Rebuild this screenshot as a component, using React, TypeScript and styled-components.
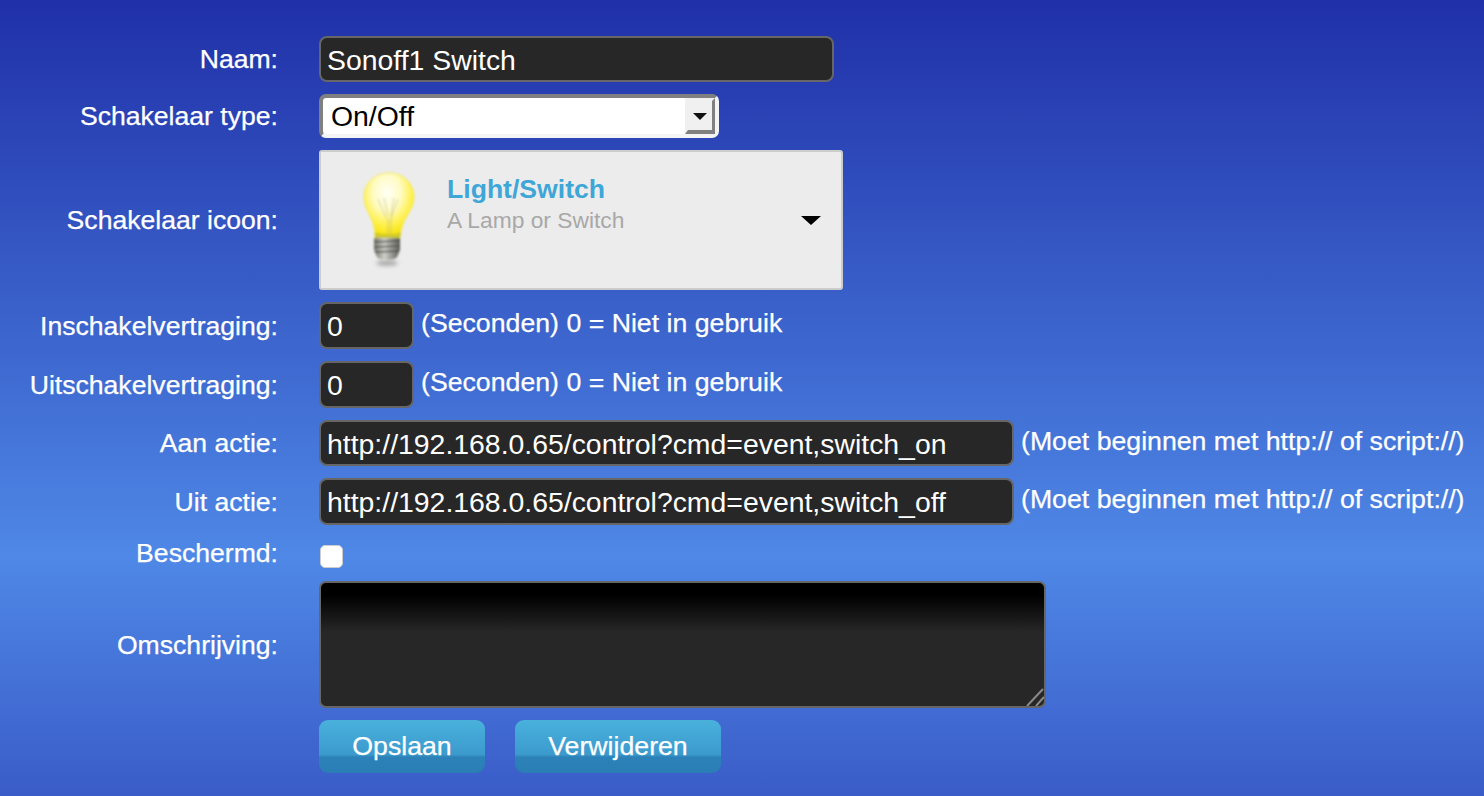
import React from 'react';
import styled, { createGlobalStyle } from 'styled-components';

const GlobalStyle = createGlobalStyle`
  html, body {
    margin: 0;
    padding: 0;
    height: 100%;
  }

  body {
    font-family: 'Liberation Sans', Arial, sans-serif;
    color: #fff;
    overflow: hidden;
  }
`;

const Page = styled.main`
  box-sizing: border-box;
  width: 1484px;
  height: 796px;
  padding-top: 36px;
  background: linear-gradient(to bottom, #2030a8 0%, #4f88e6 70%, #3a5cc8 100%);
`;

const Form = styled.form`
  display: grid;
  grid-template-columns: 278px 1fr;
  grid-template-rows: 46px 44px 140px 47px 47px 46px 47px 32px 127px 53px;
  column-gap: 41px;
  row-gap: 12px;
  align-items: center;
`;

const Label = styled.label`
  justify-self: end;
  font-size: 26.6px;
  line-height: 30px;
  -webkit-text-stroke: 0.25px #fff;
`;

const Row = styled.div`
  display: flex;
  align-items: center;
  height: 100%;
  gap: 7px;
`;

const TextInput = styled.input<{ $width: number }>`
  box-sizing: border-box;
  width: ${(p) => p.$width}px;
  height: 100%;
  padding: 2px 6px 0;
  border: 2px solid #666;
  border-radius: 8px;
  outline: none;
  background: #272727;
  color: #fff;
  font-family: inherit;
  font-size: 28.4px;
`;

const Hint = styled.span`
  font-size: 26.7px;
  line-height: 30px;
  margin-bottom: 5px;
  -webkit-text-stroke: 0.25px #fff;
`;

const SelectBox = styled.div`
  position: relative;
  box-sizing: border-box;
  width: 400px;
  height: 44px;
  border-style: solid;
  border-width: 4px;
  border-color: #808080 #f4f4f4 #f4f4f4 #808080;
  border-radius: 7px;
  background: #fff;
`;

const NativeSelect = styled.select`
  appearance: none;
  display: block;
  width: 100%;
  height: 100%;
  padding: 0 0 0 8px;
  border: none;
  outline: none;
  background: transparent;
  color: #000;
  font-family: inherit;
  font-size: 28.4px;
`;

const SelectButton = styled.span`
  position: absolute;
  top: 0;
  right: 0;
  bottom: 0;
  box-sizing: border-box;
  display: flex;
  align-items: center;
  justify-content: center;
  width: 30px;
  border-style: solid;
  border-width: 3px 3px 4px 3px;
  border-color: #f0f0f0 #808080 #808080 #f0f0f0;
  background: #f0f0f0;
  pointer-events: none;

  &::after {
    content: '';
    margin-top: 1px;
    border-style: solid;
    border-width: 7px 7px 0;
    border-color: #111 transparent transparent;
  }
`;

const IconPicker = styled.div`
  box-sizing: border-box;
  display: flex;
  align-items: center;
  width: 524px;
  height: 140px;
  padding: 0 20px 0 38px;
  border: 2px solid #ccc;
  border-radius: 3px;
  background: #ececec;
`;

const PickerText = styled.div`
  display: flex;
  flex-direction: column;
  margin-left: 28px;
  margin-bottom: 32px;
  flex: 1;
`;

const PickerTitle = styled.span`
  color: #3fa6d8;
  font-size: 26.6px;
  font-weight: 700;
  line-height: 31px;
`;

const PickerSubtitle = styled.span`
  color: #a8a8a8;
  font-size: 22.8px;
  line-height: 30px;
`;

const PickerArrow = styled.span`
  border-style: solid;
  border-width: 9px 10px 0;
  border-color: #000 transparent transparent;
`;

const Checkbox = styled.input`
  appearance: none;
  box-sizing: border-box;
  width: 23px;
  height: 23px;
  margin: 0 0 1px 1px;
  border: 1px solid #ccc;
  border-radius: 5px;
  background: #fff;
`;

const CheckRow = styled(Row)`
  align-items: flex-end;
`;

const TextAreaWrap = styled.div`
  position: relative;
  width: 727px;
  height: 127px;
`;

const TextArea = styled.textarea`
  box-sizing: border-box;
  display: block;
  width: 100%;
  height: 100%;
  border: 2px solid #666;
  border-radius: 7px;
  outline: none;
  resize: none;
  background: linear-gradient(to bottom, #000 0, #000 12px, #272727 49px);
  color: #fff;
  font-family: inherit;
  font-size: 26.6px;
`;

const Grip = styled.svg`
  position: absolute;
  right: 2px;
  bottom: 2px;
  pointer-events: none;
`;

const Buttons = styled.div`
  display: flex;
  gap: 30px;
  height: 100%;
`;

const Button = styled.button<{ $width: number }>`
  width: ${(p) => p.$width}px;
  height: 100%;
  border: none;
  border-radius: 9px;
  background: linear-gradient(to bottom, #49b1dc 0%, #3c9acd 65%, #2c82b8 70%, #2a7eb5 100%);
  color: #fff;
  font-family: inherit;
  font-size: 26.7px;
  -webkit-text-stroke: 0.25px #fff;
  cursor: pointer;
`;

function Bulb() {
  return (
    <svg width="60" height="100" viewBox="0 0 60 100" style={{ flexShrink: 0 }}>
      <defs>
        <radialGradient id="glass" cx="46%" cy="30%" r="70%">
          <stop offset="0%" stopColor="#fffff6" />
          <stop offset="40%" stopColor="#fffbc4" />
          <stop offset="72%" stopColor="#fff04a" />
          <stop offset="100%" stopColor="#f5e000" />
        </radialGradient>
        <linearGradient id="screw" x1="0" y1="0" x2="1" y2="0">
          <stop offset="0%" stopColor="#77776f" />
          <stop offset="40%" stopColor="#cfcfca" />
          <stop offset="100%" stopColor="#5b5b55" />
        </linearGradient>
        <filter id="soft" x="-20%" y="-20%" width="140%" height="140%">
          <feGaussianBlur stdDeviation="0.8" />
        </filter>
        <filter id="shadow" x="-50%" y="-100%" width="200%" height="300%">
          <feGaussianBlur stdDeviation="2" />
        </filter>
      </defs>
      <ellipse cx="28" cy="93" rx="11" ry="3" fill="#aaa" filter="url(#shadow)" />
      <g filter="url(#soft)">
        <path
          d="M30 3C15 3 5 14 5 27c0 12 8 19 10 30 1 4 1 8 1 11h25c0-3 1-7 2-11 3-11 12-18 12-30C55 14 45 3 30 3Z"
          fill="url(#glass)"
          stroke="#f4ea50"
          strokeWidth="1"
        />
        <path
          d="M19 29l8 19M39 29l-7 19M25 28l4 18M35 28l-3 18M29 48v20M32 48v20"
          fill="none"
          stroke="#a8a67e"
          strokeWidth="1"
          opacity="0.5"
        />
        <path d="M16 62c4 3 22 3 26 0l-1 6H16Z" fill="#cfc92c" />
        <path d="M15 68h26v12l-3 7c-3 4-17 4-20 0l-3-7Z" fill="url(#screw)" />
        <path
          d="M15 72l26-1M15 77l26-1M16 82l24-1"
          fill="none"
          stroke="#55554f"
          strokeWidth="1.3"
        />
      </g>
    </svg>
  );
}

export default function App() {
  return (
    <Page>
      <GlobalStyle />
      <Form>
        <Label>Naam:</Label>
        <Row>
          <TextInput $width={515} defaultValue="Sonoff1 Switch" />
        </Row>

        <Label>Schakelaar type:</Label>
        <SelectBox>
          <NativeSelect defaultValue="On/Off">
            <option>On/Off</option>
          </NativeSelect>
          <SelectButton />
        </SelectBox>

        <Label>Schakelaar icoon:</Label>
        <IconPicker>
          <Bulb />
          <PickerText>
            <PickerTitle>Light/Switch</PickerTitle>
            <PickerSubtitle>A Lamp or Switch</PickerSubtitle>
          </PickerText>
          <PickerArrow />
        </IconPicker>

        <Label>Inschakelvertraging:</Label>
        <Row>
          <TextInput $width={95} defaultValue="0" />
          <Hint>(Seconden) 0 = Niet in gebruik</Hint>
        </Row>

        <Label>Uitschakelvertraging:</Label>
        <Row>
          <TextInput $width={95} defaultValue="0" />
          <Hint>(Seconden) 0 = Niet in gebruik</Hint>
        </Row>

        <Label>Aan actie:</Label>
        <Row>
          <TextInput
            $width={695}
            defaultValue="http://192.168.0.65/control?cmd=event,switch_on"
          />
          <Hint>(Moet beginnen met http:// of script://)</Hint>
        </Row>

        <Label>Uit actie:</Label>
        <Row>
          <TextInput
            $width={695}
            defaultValue="http://192.168.0.65/control?cmd=event,switch_off"
          />
          <Hint>(Moet beginnen met http:// of script://)</Hint>
        </Row>

        <Label>Beschermd:</Label>
        <CheckRow>
          <Checkbox type="checkbox" />
        </CheckRow>

        <Label>Omschrijving:</Label>
        <TextAreaWrap>
          <TextArea />
          <Grip width="18" height="18" viewBox="0 0 18 18">
            <path d="M17 1L1 18M18 9l-8 9" stroke="#8a8a8a" strokeWidth="2" fill="none" />
          </Grip>
        </TextAreaWrap>

        <span />
        <Buttons>
          <Button type="button" $width={166}>
            Opslaan
          </Button>
          <Button type="button" $width={206}>
            Verwijderen
          </Button>
        </Buttons>
      </Form>
    </Page>
  );
}
